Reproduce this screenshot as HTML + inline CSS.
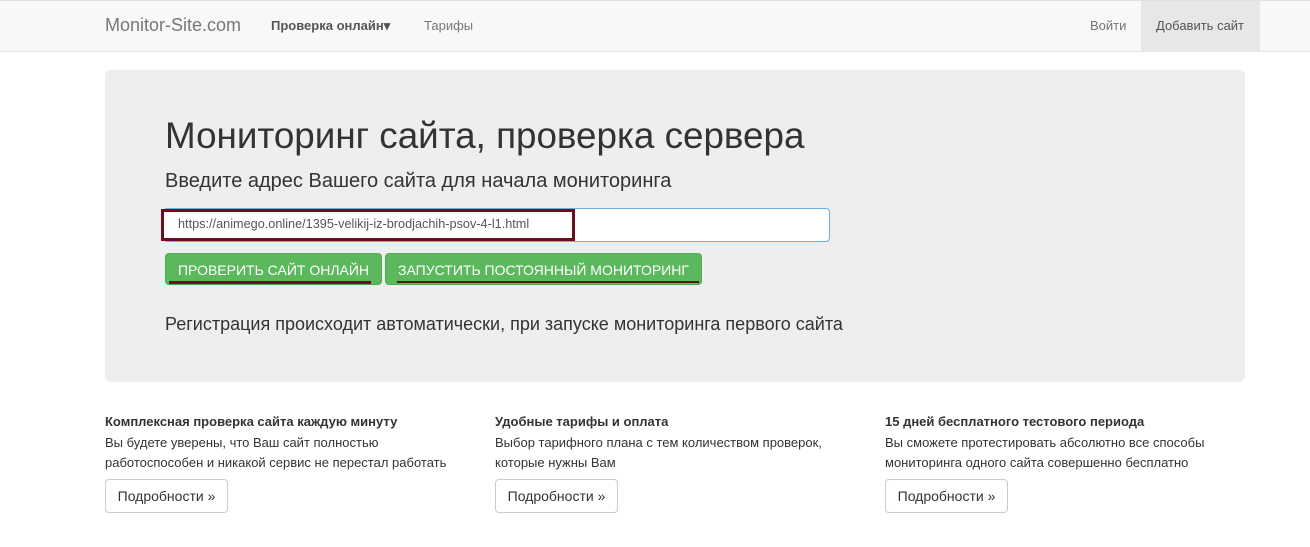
<!DOCTYPE html><html><head><meta charset="utf-8"><style>
body{margin:0;background:#fff;font-family:"Liberation Sans",sans-serif;color:#333;width:1310px;height:547px;overflow:hidden;position:relative}
.nav{position:absolute;left:0;top:0;width:1310px;height:50px;background:#f8f8f8;border-bottom:1px solid #e7e7e7;border-top:1px solid #e0e0e8}
.nav span{position:absolute;top:17px;font-size:14px;color:#777}
.jumbo{position:absolute;left:105px;top:70px;width:1140px;height:312px;background:#eee;border-radius:6px}
.a{position:absolute}
.btn{position:absolute;top:253px;height:32px;background:#5cb85c;border:1px solid #4cae4c;border-radius:4px;color:#fff;font-size:14px;line-height:32px;box-sizing:border-box}
.col h4{margin:0;font-size:13px;font-weight:bold}
.col p{margin:4px 0 0;font-size:13px;line-height:20px}
.more{position:absolute;top:479px;width:123px;height:34px;border:1px solid #ccc;border-radius:4px;font-size:14px;line-height:32px;text-align:center;box-sizing:border-box;background:#fff}
</style></head><body>
<div class="nav">
<span style="left:105px;top:14px;font-size:18px">Monitor-Site.com</span>
<span style="left:271px;font-weight:bold;font-size:13px;color:#555">Проверка онлайн▾</span>
<span style="left:424px;font-size:13px">Тарифы</span>
<span style="left:1090px;font-size:13px">Войти</span>
<div style="position:absolute;left:1141px;top:0;width:119px;height:50px;background:#e7e7e7"></div>
<span style="left:1156px;font-size:13px;color:#555">Добавить сайт</span>
</div>
<div class="jumbo"></div>
<div class="a" style="left:165px;top:115px;font-size:36.8px">Мониторинг сайта, проверка сервера</div>
<div class="a" style="left:165px;top:170px;font-size:20px">Введите адрес Вашего сайта для начала мониторинга</div>
<div class="a" style="left:163px;top:208px;width:667px;height:34px;background:#fff;border:1px solid #66afe9;border-radius:4px;box-sizing:border-box"></div>
<div class="a" style="left:161px;top:209px;width:414px;height:32px;border:3px solid #6b0f1f;box-sizing:border-box;background:#fff"></div>
<div class="a" style="left:178px;top:217px;font-size:12.7px;color:#555">https://animego.online/1395-velikij-iz-brodjachih-psov-4-l1.html</div>
<div class="btn" style="left:165px;width:217px;text-align:center">ПРОВЕРИТЬ САЙТ ОНЛАЙН</div>
<div class="btn" style="left:385px;width:317px;text-align:center">ЗАПУСТИТЬ ПОСТОЯННЫЙ МОНИТОРИНГ</div>
<div class="a" style="left:169px;top:281px;width:202px;height:3px;background:#6b0f1f"></div>
<div class="a" style="left:397px;top:281px;width:302px;height:2px;background:#5a1a10"></div>
<div class="a" style="left:165px;top:314px;font-size:18px">Регистрация происходит автоматически, при запуске мониторинга первого сайта</div>
<div class="a col" style="left:105px;top:414px"><h4>Комплексная проверка сайта каждую минуту</h4><p>Вы будете уверены, что Ваш сайт полностью<br>работоспособен и никакой сервис не перестал работать</p></div>
<div class="a col" style="left:495px;top:414px"><h4>Удобные тарифы и оплата</h4><p>Выбор тарифного плана с тем количеством проверок,<br>которые нужны Вам</p></div>
<div class="a col" style="left:885px;top:414px"><h4>15 дней бесплатного тестового периода</h4><p>Вы сможете протестировать абсолютно все способы<br>мониторинга одного сайта совершенно бесплатно</p></div>
<div class="more" style="left:105px">Подробности »</div>
<div class="more" style="left:495px">Подробности »</div>
<div class="more" style="left:885px">Подробности »</div>
</body></html>
